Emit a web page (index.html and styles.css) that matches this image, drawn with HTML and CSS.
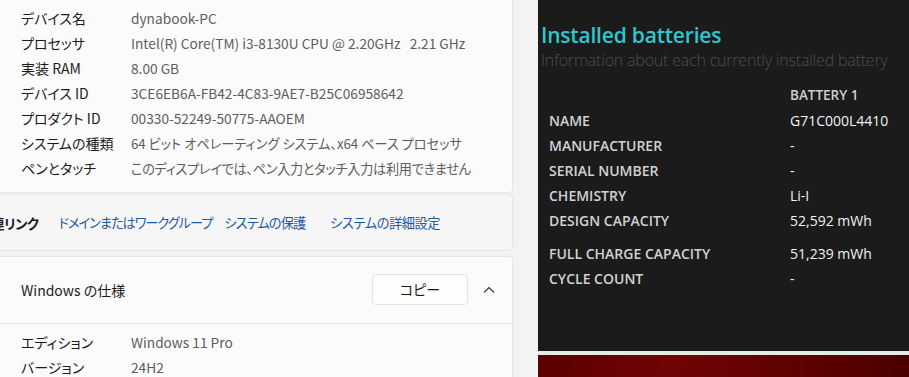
FILE: index.html
```html
<!DOCTYPE html>
<html lang="ja">
<head>
    <meta charset="UTF-8">
    <meta name="viewport" content="width=device-width, initial-scale=1.0">
    <title>バージョン情報</title>
    <link rel="stylesheet" href="styles.css">
</head>
<body>

    <div class="settings">
        <div class="card spec-card">
            <div class="spec-row"><span class="spec-label">デバイス名</span><span class="spec-value">dynabook-PC</span></div>
            <div class="spec-row"><span class="spec-label">プロセッサ</span><span class="spec-value">Intel(R) Core(TM) i3-8130U CPU @ 2.20GHz&nbsp;&nbsp;&nbsp;2.21 GHz</span></div>
            <div class="spec-row"><span class="spec-label">実装 RAM</span><span class="spec-value">8.00 GB</span></div>
            <div class="spec-row"><span class="spec-label">デバイス ID</span><span class="spec-value">3CE6EB6A-FB42-4C83-9AE7-B25C06958642</span></div>
            <div class="spec-row"><span class="spec-label">プロダクト ID</span><span class="spec-value">00330-52249-50775-AAOEM</span></div>
            <div class="spec-row"><span class="spec-label">システムの種類</span><span class="spec-value ja">64 ビット オペレーティング システム、x64 ベース プロセッサ</span></div>
            <div class="spec-row"><span class="spec-label">ペンとタッチ</span><span class="spec-value ja tight">このディスプレイでは、ペン入力とタッチ入力は利用できません</span></div>
        </div>

        <div class="card links-card">
            <span class="links-label">関連リンク</span>
            <a href="#" class="link-domain">ドメインまたはワークグループ</a>
            <a href="#" class="link-protect">システムの保護</a>
            <a href="#" class="link-advanced">システムの詳細設定</a>
        </div>

        <div class="card windows-card">
            <div class="windows-head">
                <span class="windows-title">Windows の仕様</span>
                <button class="copy-btn">コピー</button>
                <svg class="chevron" width="12" height="8" viewBox="0 0 12 8">
                    <path d="M1 6.5 L6 1.5 L11 6.5" fill="none" stroke="#333" stroke-width="1.1"/>
                </svg>
            </div>
            <div class="windows-body">
                <div class="spec-row"><span class="spec-label">エディション</span><span class="spec-value">Windows 11 Pro</span></div>
                <div class="spec-row"><span class="spec-label">バージョン</span><span class="spec-value">24H2</span></div>
            </div>
        </div>
    </div>

    <div class="side">
        <div class="report">
            <h1>Installed batteries</h1>
            <p class="subtitle">Information about each currently installed battery</p>
            <div class="battery-table">
                <span></span><span class="col-head">BATTERY 1</span>
                <span class="b-label">NAME</span><span class="b-value">G71C000L4410</span>
                <span class="b-label">MANUFACTURER</span><span class="b-value">-</span>
                <span class="b-label">SERIAL NUMBER</span><span class="b-value">-</span>
                <span class="b-label">CHEMISTRY</span><span class="b-value">Li-I</span>
                <span class="b-label">DESIGN CAPACITY</span><span class="b-value">52,592 mWh</span>
                <span class="b-label spaced">FULL CHARGE CAPACITY</span><span class="b-value spaced">51,239 mWh</span>
                <span class="b-label">CYCLE COUNT</span><span class="b-value">-</span>
            </div>
        </div>
        <div class="strip"></div>
        <div class="wallpaper"></div>
    </div>

</body>
</html>
```

FILE: styles.css
```css
html {
    overflow: hidden;
}
body {
    margin: 0;
    height: 377px;
    overflow: hidden;
    display: flex;
    background-color: #f3f3f3;
    font-family: "Noto Sans CJK JP", sans-serif;
    font-size: 14px;
    font-feature-settings: "palt";
    color: #1b1b1b;
}
.settings {
    width: 513px;
    height: 377px;
    overflow: hidden;
    margin-right: 25px;
    flex-shrink: 0;
}
.card {
    margin-left: -20px;
    border: 1px solid #e5e5e5;
    border-radius: 4px;
    box-sizing: border-box;
}
.spec-card {
    background-color: #fbfbfb;
    margin-top: -10px;
    padding: 16px 0 12px 40px;
    border-top: none;
    border-radius: 0 0 4px 4px;
    height: 203px;
}
.spec-row {
    display: flex;
    height: 25px;
    line-height: 25px;
    white-space: nowrap;
}
.spec-label {
    width: 110px;
    flex-shrink: 0;
}
.spec-value {
    color: #5d5d5d;
    font-size: 13.7px;
}
.spec-value.ja {
    font-size: 13.2px;
}
.spec-value.tight {
    letter-spacing: -0.3px;
}
.links-card {
    margin-top: 1px;
    height: 57px;
    background-color: #f6f6f6;
    display: flex;
    align-items: center;
    white-space: nowrap;
}
.links-label {
    font-weight: bold;
    font-size: 13.5px;
    letter-spacing: -0.5px;
    margin-left: -3px;
    margin-right: 20px;
}
.links-card a {
    color: #1d5aa3;
    text-decoration: none;
    font-size: 13.2px;
}
.link-domain {
    letter-spacing: -1px;
    margin-right: 12px;
}
.link-protect {
    letter-spacing: -0.9px;
    margin-right: 25px;
}
.link-advanced {
    letter-spacing: -0.4px;
}
.windows-card {
    margin-top: 5px;
    background-color: #fbfbfb;
    height: 130px;
    border-bottom: none;
    border-radius: 4px 4px 0 0;
}
.windows-head {
    height: 66px;
    display: flex;
    align-items: center;
    padding-left: 40px;
    border-bottom: 1px solid #e8e8e8;
}
.windows-title {
    flex: 1;
}
.copy-btn {
    width: 96px;
    height: 31px;
    margin-top: -2px;
    background-color: #fefefe;
    border: 1px solid #e3e3e3;
    border-radius: 4px;
    font-family: inherit;
    font-size: 14px;
    font-feature-settings: "palt";
    color: #1b1b1b;
}
.chevron {
    margin: 0 17px 0 15px;
}
.windows-body {
    padding: 6px 0 0 40px;
}
.side {
    flex: 1;
    display: flex;
    flex-direction: column;
}
.report {
    height: 351px;
    background-color: #1b1b1b;
    padding-left: 3px;
    box-sizing: border-box;
    font-family: "Open Sans", sans-serif;
    font-feature-settings: normal;
}
.report h1 {
    margin: 0;
    padding-top: 20px;
    font-size: 21px;
    font-weight: 600;
    line-height: 30px;
    color: #2fc6cf;
    letter-spacing: -0.2px;
}
.subtitle {
    margin: 0;
    font-size: 16px;
    font-weight: 300;
    line-height: 20px;
    letter-spacing: -0.2px;
    color: #4e4e4e;
    white-space: nowrap;
}
.battery-table {
    display: grid;
    grid-template-columns: 241px auto;
    padding: 13px 0 0 8px;
    font-size: 14px;
    line-height: 25px;
}
.col-head {
    font-weight: 600;
    color: #cfcfcf;
    font-size: 13.5px;
}
.b-label {
    font-weight: 600;
    color: #d2d2d2;
}
.b-value {
    color: #f2f2f2;
}
.spaced {
    padding-top: 8px;
}
.strip {
    height: 4px;
    background-color: #e9e9e9;
}
.wallpaper {
    flex: 1;
    background: linear-gradient(100deg, #5a0000 0%, #720404 35%, #640202 60%, #4c0000 100%);
}
```
